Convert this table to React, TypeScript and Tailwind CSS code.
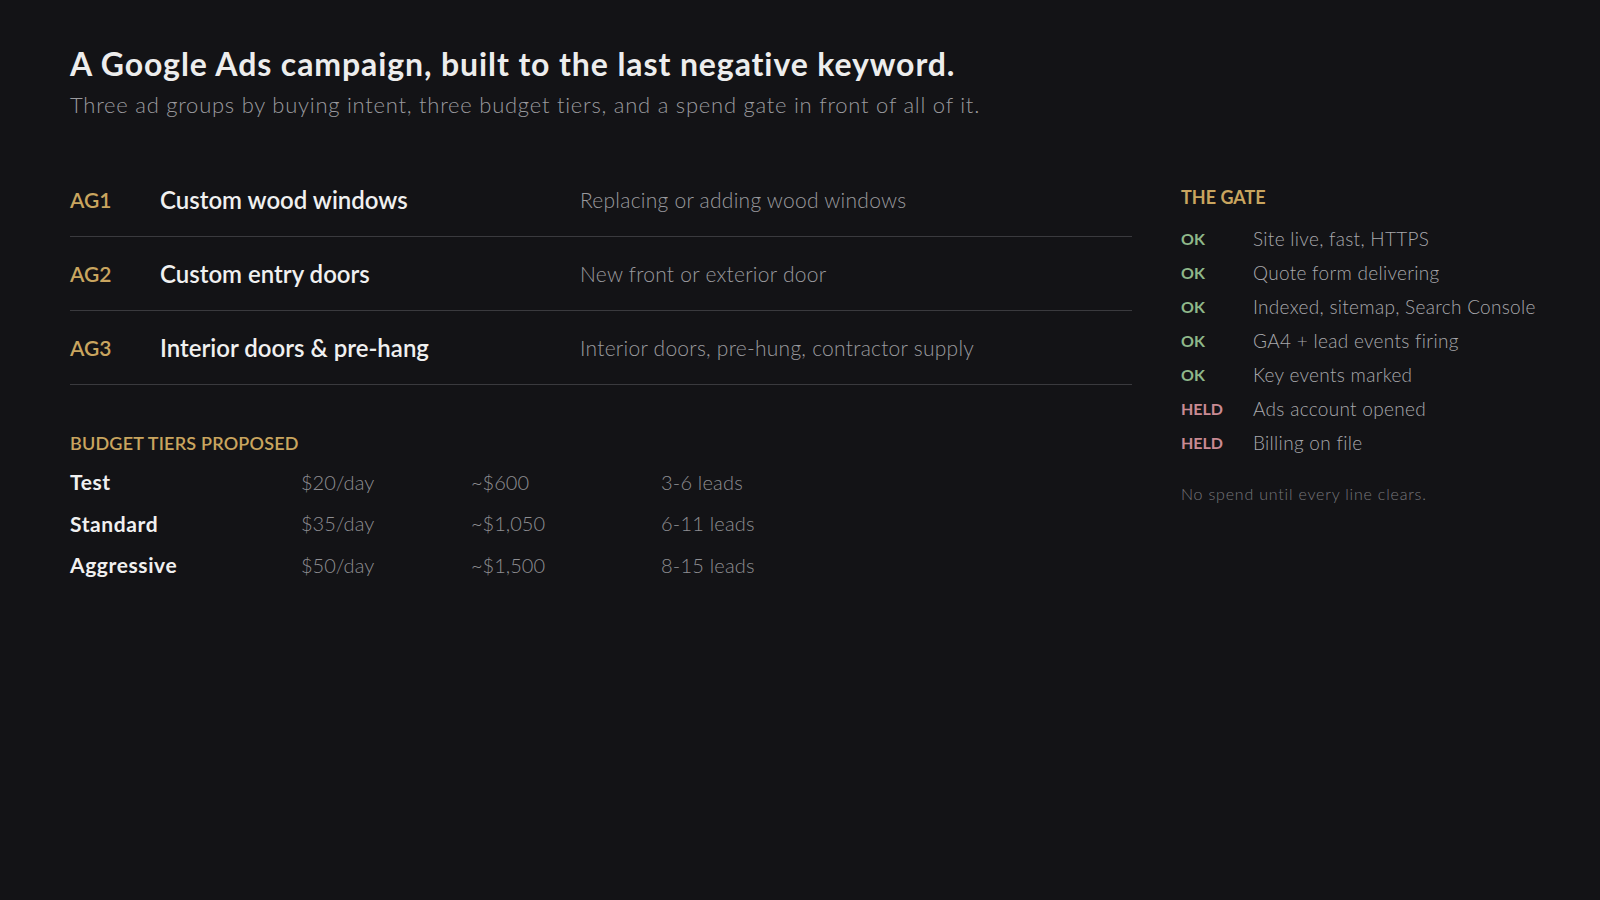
import React from 'react';

const groups = [
  { id: 'AG1', name: 'Custom wood windows', desc: 'Replacing or adding wood windows' },
  { id: 'AG2', name: 'Custom entry doors', desc: 'New front or exterior door' },
  { id: 'AG3', name: 'Interior doors & pre-hang', desc: 'Interior doors, pre-hung, contractor supply' },
];

const tiers = [
  { name: 'Test', daily: '$20/day', month: '~$600', leads: '3-6 leads' },
  { name: 'Standard', daily: '$35/day', month: '~$1,050', leads: '6-11 leads' },
  { name: 'Aggressive', daily: '$50/day', month: '~$1,500', leads: '8-15 leads' },
];

const gate = [
  { ok: true, text: 'Site live, fast, HTTPS' },
  { ok: true, text: 'Quote form delivering' },
  { ok: true, text: 'Indexed, sitemap, Search Console' },
  { ok: true, text: 'GA4 + lead events firing' },
  { ok: true, text: 'Key events marked' },
  { ok: false, text: 'Ads account opened' },
  { ok: false, text: 'Billing on file' },
];

export default function App() {
  return (
    <div className="min-h-screen w-full bg-[#131316] text-white font-['Lato',sans-serif] px-[70px] pt-[44px]">
      {/* Header */}
      <h1 className="text-[32px] font-bold leading-[40px] text-[#ededed] tracking-[0.9px] whitespace-nowrap">
        A Google Ads campaign, built to the last negative keyword.
      </h1>
      <p className="text-[22px] font-light leading-[30px] text-[#9a9a9e] mt-[6px] tracking-[0.75px] whitespace-nowrap">
        Three ad groups by buying intent, three budget tiers, and a spend gate in front of all of it.
      </p>

      <div className="flex mt-[43px]">
        {/* Left column */}
        <div className="w-[1062px] shrink-0">
          {groups.map((g) => (
            <div key={g.id} className="flex items-center h-[74px] border-b border-[#3a3a3e]">
              <div className="w-[90px] text-[21px] font-semibold text-[#c9a55f]">{g.id}</div>
              <div className="w-[420px] text-[24px] font-semibold text-[#f0f0f0]">{g.name}</div>
              <div className="text-[21px] font-light text-[#9a9a9e] tracking-[0.25px]">{g.desc}</div>
            </div>
          ))}

          <div className="mt-[45px] text-[18px] font-semibold text-[#c9a55f] uppercase tracking-[0.2px]">Budget tiers proposed</div>
          <div className="mt-[4px]">
            {tiers.map((t) => (
              <div key={t.name} className="flex items-center h-[41.5px] text-[20px]">
                <div className="w-[231px] text-[21px] font-bold text-[#f0f0f0] tracking-[0.6px]">{t.name}</div>
                <div className="w-[170px] font-light text-[#8e8e92]">{t.daily}</div>
                <div className="w-[190px] font-light text-[#8e8e92]">{t.month}</div>
                <div className="font-light text-[#8e8e92] tracking-[0.2px]">{t.leads}</div>
              </div>
            ))}
          </div>
        </div>

        {/* Right column: the gate */}
        <div className="ml-[49px] pt-[22px] shrink-0 whitespace-nowrap">
          <div className="text-[18px] font-bold text-[#c9a55f] uppercase leading-[24px]">The gate</div>
          <div className="mt-[13px]">
            {gate.map((r) => (
              <div key={r.text} className="flex items-center h-[34px]">
                <div className={`w-[72px] shrink-0 text-[16px] font-bold ${r.ok ? 'text-[#8fb88a]' : 'text-[#c98a93]'}`}>
                  {r.ok ? 'OK' : 'HELD'}
                </div>
                <div className="text-[19px] font-light text-[#a8a8ac] tracking-[0.3px]">{r.text}</div>
              </div>
            ))}
          </div>
          <div className="mt-[22px] text-[16px] font-light text-[#77777b] tracking-[0.8px]">No spend until every line clears.</div>
        </div>
      </div>
    </div>
  );
}
